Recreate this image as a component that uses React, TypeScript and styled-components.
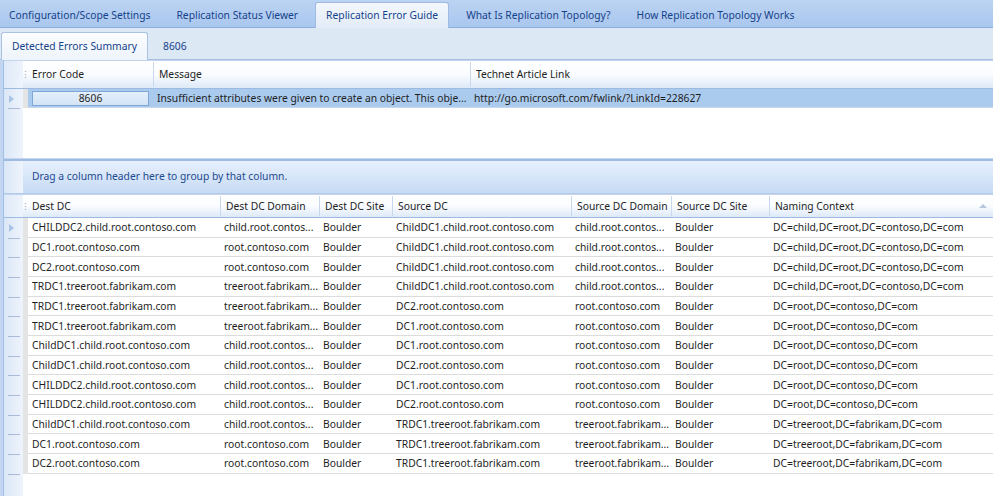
import React from "react";
import styled, { createGlobalStyle } from "styled-components";

const Global = createGlobalStyle`
  html, body { margin: 0; padding: 0; background: #ffffff; }
  body { font-family: "Segoe UI", "Noto Sans", "Open Sans", sans-serif; font-size: 10.3px; color: #1e1e1e; }
  * { box-sizing: border-box; }
`;

const Root = styled.div`
  width: 993px;
  height: 496px;
  display: flex;
  flex-direction: column;
  overflow: hidden;
`;

const TopTabBar = styled.div`
  height: 28px;
  display: flex;
  align-items: flex-end;
  background: linear-gradient(#bcd4f3, #a9c6ee);
  border-bottom: 1px solid #8eafdc;
`;

const TopTab = styled.div<{ $active?: boolean }>`
  height: 26px;
  display: flex;
  align-items: center;
  padding: 0 ${(p) => (p.$active ? "10px" : "8px")} 2px;
  margin-right: 8px;
  color: #15428b;
  white-space: nowrap;
  background: ${(p) => (p.$active ? "linear-gradient(#f4f8fd, #e2ebf7)" : "transparent")};
  border: ${(p) => (p.$active ? "1px solid #9fbbe3" : "1px solid transparent")};
  border-bottom: none;
  border-radius: 3px 3px 0 0;
  margin-bottom: -1px;
`;

const SubTabBar = styled.div`
  height: 32px;
  display: flex;
  align-items: flex-end;
  padding-left: 1px;
  background: #dde8f5;
  border-bottom: 1px solid #a7bfe2;
`;

const SubTab = styled.div<{ $active?: boolean }>`
  height: 28px;
  display: flex;
  align-items: center;
  padding: 0 ${(p) => (p.$active ? "10px" : "14px")} 2px;
  color: #15428b;
  white-space: nowrap;
  background: ${(p) => (p.$active ? "linear-gradient(#fbfdff, #eef4fb)" : "transparent")};
  border: ${(p) => (p.$active ? "1px solid #a9c1e3" : "1px solid transparent")};
  border-bottom: none;
  border-radius: 3px 3px 0 0;
  margin-bottom: -1px;
`;

const Body = styled.div`
  flex: 1;
  display: flex;
  min-height: 0;
`;

const Frame = styled.div`
  width: 4px;
  background: #c2d6f1;
  border-right: 1px solid #a4bfe4;
`;

const Content = styled.div`
  flex: 1;
  display: flex;
  flex-direction: column;
  min-width: 0;
`;

const GridArea = styled.div<{ $h?: number }>`
  display: flex;
  flex-direction: column;
  height: ${(p) => (p.$h ? `${p.$h}px` : "auto")};
  flex: ${(p) => (p.$h ? "none" : "1")};
  background: linear-gradient(90deg, #dbe7f7 0px, #eef4fc 19px, #ffffff 19px);
  min-height: 0;
`;

const Splitter = styled.div`
  height: 3px;
  background: #9fbbe1;
  border-top: 1px solid #c4d6ef;
`;

const GroupPanel = styled.div`
  height: 33px;
  display: flex;
  align-items: center;
  padding-left: 28px;
  padding-bottom: 2px;
  color: #1d4a8f;
  background: linear-gradient(90deg, #dbe7f7 0px, #eef4fc 19px, transparent 19px),
    linear-gradient(#e7f0fc, #c7dbf5);
  border-bottom: 1px solid #b2c9e9;
`;

const HeaderRow = styled.div<{ $h: number }>`
  display: flex;
  height: ${(p) => p.$h}px;
  flex: none;
  align-items: stretch;
  background: linear-gradient(90deg, #dfe9f8 0px, #eef4fc 19px, transparent 19px),
    linear-gradient(#ffffff, #fafcff 50%, #dde9f8);
  border-top: 1px solid #c3d5ee;
  border-bottom: 1px solid #9dbbe2;
`;

const Indicator = styled.div<{ $dash?: boolean }>`
  width: 19px;
  flex: none;
  position: relative;
  display: flex;
  align-items: center;
  justify-content: center;
  &::after {
    content: "";
    display: ${(p) => (p.$dash ? "block" : "none")};
    position: absolute;
    left: 4px;
    right: 3px;
    bottom: -1px;
    height: 1px;
    background: #a8bcd8;
  }
`;

const Arrow = styled.span`
  width: 0;
  height: 0;
  border-top: 4px solid transparent;
  border-bottom: 4px solid transparent;
  border-left: 5px solid #a9c3e6;
  margin-left: -5px;
`;

const Gutter = styled.div<{ $header?: boolean }>`
  width: 5px;
  flex: none;
  background: ${(p) => (p.$header ? "transparent" : "#e4e4e4")};
  display: flex;
  align-items: center;
  justify-content: center;
  color: #8a99ad;
  font-size: 9px;
  line-height: 1;
`;

const HeadCell = styled.div<{ $w?: number; $first?: boolean }>`
  width: ${(p) => (p.$w ? `${p.$w}px` : "auto")};
  flex: ${(p) => (p.$w ? "none" : "1")};
  display: flex;
  align-items: center;
  justify-content: space-between;
  padding-left: ${(p) => (p.$first ? "4px" : "5px")};
  padding-right: 6px;
  padding-bottom: 1px;
  white-space: nowrap;
  overflow: hidden;
  color: #1e1e1e;
  border-left: ${(p) => (p.$first ? "none" : "1px solid #c9d7ea")};
  margin: 1px 0;
`;

const SortUp = styled.span`
  width: 0;
  height: 0;
  border-left: 4px solid transparent;
  border-right: 4px solid transparent;
  border-bottom: 4px solid #b7c6da;
`;

const Row = styled.div<{ $h: number }>`
  display: flex;
  height: ${(p) => p.$h}px;
  flex: none;
`;

const RowCells = styled.div<{ $selected?: boolean }>`
  flex: 1;
  display: flex;
  min-width: 0;
  background: ${(p) => (p.$selected ? "#abcbee" : "#ffffff")};
  border-bottom: 1px solid ${(p) => (p.$selected ? "#c8d9ee" : "#dcdcdc")};
`;

const Cell = styled.div<{ $w?: number }>`
  width: ${(p) => (p.$w ? `${p.$w}px` : "auto")};
  flex: ${(p) => (p.$w ? "none" : "1")};
  display: flex;
  align-items: center;
  padding-left: 4px;
  padding-right: 2px;
  white-space: nowrap;
  overflow: hidden;
  color: #1e1e1e;
`;

const FocusBox = styled.div`
  width: 117px;
  height: 15px;
  display: flex;
  align-items: center;
  justify-content: center;
  background: linear-gradient(#e4effb, #d3e4f7);
  border: 1px solid #7ea6d8;
`;

const Filler = styled.div`
  flex: 1;
`;

const topCols = [125, 317, 0];
const botCols = [192, 99, 73, 179, 100, 98, 0];

const rows: string[][] = [
  ["CHILDDC2.child.root.contoso.com", "child.root.contos...", "Boulder", "ChildDC1.child.root.contoso.com", "child.root.contos...", "Boulder", "DC=child,DC=root,DC=contoso,DC=com"],
  ["DC1.root.contoso.com", "root.contoso.com", "Boulder", "ChildDC1.child.root.contoso.com", "child.root.contos...", "Boulder", "DC=child,DC=root,DC=contoso,DC=com"],
  ["DC2.root.contoso.com", "root.contoso.com", "Boulder", "ChildDC1.child.root.contoso.com", "child.root.contos...", "Boulder", "DC=child,DC=root,DC=contoso,DC=com"],
  ["TRDC1.treeroot.fabrikam.com", "treeroot.fabrikam...", "Boulder", "ChildDC1.child.root.contoso.com", "child.root.contos...", "Boulder", "DC=child,DC=root,DC=contoso,DC=com"],
  ["TRDC1.treeroot.fabrikam.com", "treeroot.fabrikam...", "Boulder", "DC2.root.contoso.com", "root.contoso.com", "Boulder", "DC=root,DC=contoso,DC=com"],
  ["TRDC1.treeroot.fabrikam.com", "treeroot.fabrikam...", "Boulder", "DC1.root.contoso.com", "root.contoso.com", "Boulder", "DC=root,DC=contoso,DC=com"],
  ["ChildDC1.child.root.contoso.com", "child.root.contos...", "Boulder", "DC1.root.contoso.com", "root.contoso.com", "Boulder", "DC=root,DC=contoso,DC=com"],
  ["ChildDC1.child.root.contoso.com", "child.root.contos...", "Boulder", "DC2.root.contoso.com", "root.contoso.com", "Boulder", "DC=root,DC=contoso,DC=com"],
  ["CHILDDC2.child.root.contoso.com", "child.root.contos...", "Boulder", "DC1.root.contoso.com", "root.contoso.com", "Boulder", "DC=root,DC=contoso,DC=com"],
  ["CHILDDC2.child.root.contoso.com", "child.root.contos...", "Boulder", "DC2.root.contoso.com", "root.contoso.com", "Boulder", "DC=root,DC=contoso,DC=com"],
  ["ChildDC1.child.root.contoso.com", "child.root.contos...", "Boulder", "TRDC1.treeroot.fabrikam.com", "treeroot.fabrikam...", "Boulder", "DC=treeroot,DC=fabrikam,DC=com"],
  ["DC1.root.contoso.com", "root.contoso.com", "Boulder", "TRDC1.treeroot.fabrikam.com", "treeroot.fabrikam...", "Boulder", "DC=treeroot,DC=fabrikam,DC=com"],
  ["DC2.root.contoso.com", "root.contoso.com", "Boulder", "TRDC1.treeroot.fabrikam.com", "treeroot.fabrikam...", "Boulder", "DC=treeroot,DC=fabrikam,DC=com"],
];

const botHeaders = ["Dest DC", "Dest DC Domain", "Dest DC Site", "Source DC", "Source DC Domain", "Source DC Site", "Naming Context"];

export default function App() {
  return (
    <Root>
      <Global />
      <TopTabBar>
        <TopTab>Configuration/Scope Settings</TopTab>
        <TopTab>Replication Status Viewer</TopTab>
        <TopTab $active>Replication Error Guide</TopTab>
        <TopTab>What Is Replication Topology?</TopTab>
        <TopTab>How Replication Topology Works</TopTab>
      </TopTabBar>
      <SubTabBar>
        <SubTab $active>Detected Errors Summary</SubTab>
        <SubTab>8606</SubTab>
      </SubTabBar>
      <Body>
        <Frame />
        <Content>
          <GridArea $h={98}>
            <HeaderRow $h={29}>
              <Indicator />
              <Gutter $header>⁝</Gutter>
              <HeadCell $w={topCols[0]} $first>Error Code</HeadCell>
              <HeadCell $w={topCols[1]}>Message</HeadCell>
              <HeadCell>Technet Article Link</HeadCell>
            </HeaderRow>
            <Row $h={19}>
              <Indicator $dash>
                <Arrow />
              </Indicator>
              <Gutter />
              <RowCells $selected>
                <Cell $w={topCols[0]}>
                  <FocusBox>8606</FocusBox>
                </Cell>
                <Cell $w={topCols[1]}>
                  Insufficient attributes were given to create an object. This obje...
                </Cell>
                <Cell>http://go.microsoft.com/fwlink/?LinkId=228627</Cell>
              </RowCells>
            </Row>
            <Filler />
          </GridArea>
          <Splitter />
          <GroupPanel>Drag a column header here to group by that column.</GroupPanel>
          <GridArea>
            <HeaderRow $h={24}>
              <Indicator />
              <Gutter $header>⁝</Gutter>
              {botHeaders.map((h, i) => (
                <HeadCell key={h} $w={botCols[i] || undefined} $first={i === 0}>
                  {h}
                  {i === botHeaders.length - 1 && <SortUp />}
                </HeadCell>
              ))}
            </HeaderRow>
            {rows.map((r, ri) => (
              <Row key={ri} $h={19.67}>
                <Indicator $dash>{ri === 0 && <Arrow />}</Indicator>
                <Gutter />
                <RowCells>
                  {r.map((c, ci) => (
                    <Cell key={ci} $w={botCols[ci] || undefined}>
                      {c}
                    </Cell>
                  ))}
                </RowCells>
              </Row>
            ))}
            <Filler />
          </GridArea>
        </Content>
      </Body>
    </Root>
  );
}
